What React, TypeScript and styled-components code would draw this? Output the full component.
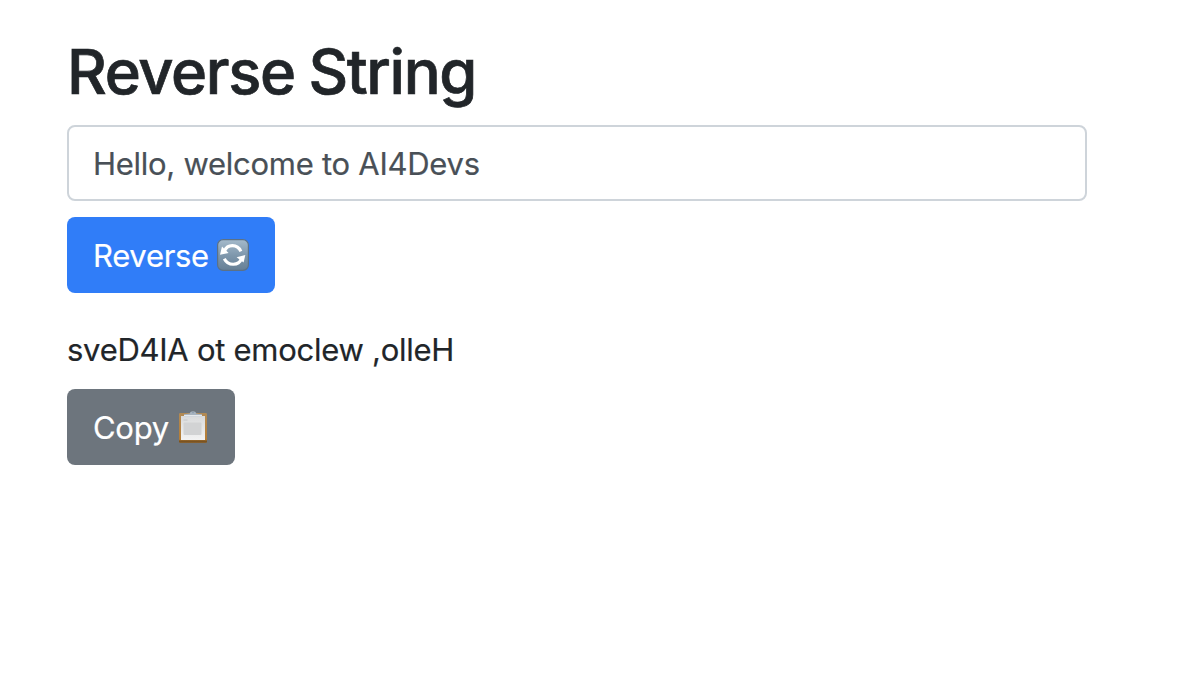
import React, { useState } from 'react';
import styled, { createGlobalStyle } from 'styled-components';

const GlobalStyle = createGlobalStyle`
  *, *::before, *::after { box-sizing: border-box; }
  body {
    margin: 0;
    background: #fff;
    color: #212529;
    font-family: Inter, "Liberation Sans", sans-serif;
    font-size: 31px;
    font-weight: 400;
    line-height: 48px;
    -webkit-text-stroke: 0.2px currentColor;
  }
`;

const Page = styled.main`
  display: flex;
  flex-direction: column;
  align-items: flex-start;
  padding: 33px 99px 0 67px;
`;

const Title = styled.h1`
  margin: 0 0 15px;
  font-size: 61.5px;
  font-weight: 500;
  line-height: 77px;
  letter-spacing: -1.35px;
  word-spacing: -1.5px;
  -webkit-text-stroke: 0.7px currentColor;
`;

const TextInput = styled.input`
  width: 100%;
  height: 76px;
  padding: 12px 24px;
  border: 2px solid #ced4da;
  border-radius: 8px;
  background: #fff;
  color: #495057;
  font: inherit;
  letter-spacing: -0.27px;
  outline: none;
`;

const Button = styled.button<{ $tone: 'primary' | 'secondary'; $width: number }>`
  display: flex;
  align-items: center;
  justify-content: space-between;
  width: ${({ $width }) => $width}px;
  height: 76px;
  padding: 0 26px;
  border: 0;
  border-radius: 8px;
  background: ${({ $tone }) => ($tone === 'primary' ? '#307df8' : '#6d757d')};
  color: #fff;
  font: inherit;
  letter-spacing: -0.3px;
  white-space: nowrap;
`;

const ReverseButton = styled(Button)`
  margin-top: 16px;
`;

const CopyButton = styled(Button)`
  padding-right: 27px;
`;

const Label = styled.span`
  padding-top: 2px;
`;

const Result = styled.p`
  margin: 33px 0 15px;
  letter-spacing: -0.27px;
`;

const Icon = styled.svg`
  flex: none;
  display: block;
`;

const CycleIcon = () => (
  <Icon width="32" height="32" viewBox="0 0 32 32" aria-hidden="true">
    <defs>
      <linearGradient id="tile" x1="0" y1="0" x2="0" y2="1">
        <stop offset="0" stopColor="#a5bacb" />
        <stop offset="0.5" stopColor="#7f98ad" />
        <stop offset="1" stopColor="#667f95" />
      </linearGradient>
    </defs>
    <rect x="0.6" y="0.6" width="30.8" height="30.8" rx="5.5" fill="url(#tile)" stroke="#5b7187" strokeWidth="1.2" />
    <g fill="none" stroke="#fff" strokeWidth="3.1">
      <path d="M7.6 11.8C10.2 5.2 20.2 4.4 23.9 12.3" />
      <path d="M24.4 19.9C21.8 26.8 11.2 27.4 7.3 19.7" />
    </g>
    <path d="M5 7.6 L3 15.8 L11.6 14Z" fill="#fff" />
    <path d="M28.3 16 L19.6 18.3 L26.6 23.6Z" fill="#fff" />
  </Icon>
);

const ClipboardIcon = () => (
  <Icon width="30" height="34" viewBox="0 0 30 34" aria-hidden="true">
    <defs>
      <linearGradient id="board" x1="0" y1="0" x2="0" y2="1">
        <stop offset="0" stopColor="#b28a55" />
        <stop offset="0.88" stopColor="#b57d35" />
        <stop offset="0.94" stopColor="#76501f" />
        <stop offset="1" stopColor="#8a6230" />
      </linearGradient>
      <linearGradient id="sheet" x1="0" y1="0" x2="0" y2="1">
        <stop offset="0" stopColor="#d9dadb" />
        <stop offset="1" stopColor="#f3f3f3" />
      </linearGradient>
    </defs>
    <rect x="1" y="3" width="28" height="30" rx="1.3" fill="url(#board)" />
    <rect x="3" y="6" width="24" height="24" fill="url(#sheet)" />
    <path d="M5.5 10h4" stroke="#bfc0c1" strokeWidth="0.8" />
    <rect x="5.5" y="12.5" width="18" height="12.5" rx="1" fill="#d2d3d4" />
    <path d="M11.8 3.5C12 0.4 18 0.4 18.2 3.5L24 4.2V6.8H6V4.2Z" fill="#a7b3bf" />
    <path d="M6 5.8h18" stroke="#e5e8eb" strokeWidth="1.6" />
    <circle cx="15" cy="2.6" r="0.8" fill="#8799ac" />
  </Icon>
);

export default function App() {
  const [text, setText] = useState('Hello, welcome to AI4Devs');
  const [result, setResult] = useState('sveD4IA ot emoclew ,olleH');

  return (
    <>
      <GlobalStyle />
      <Page>
        <Title>Reverse String</Title>
        <TextInput aria-label="Text" value={text} onChange={(e) => setText(e.target.value)} />
        <ReverseButton $tone="primary" $width={208} onClick={() => setResult([...text].reverse().join(''))}>
          <Label>Reverse</Label>
          <CycleIcon />
        </ReverseButton>
        <Result>{result}</Result>
        <CopyButton $tone="secondary" $width={168} onClick={() => navigator.clipboard?.writeText(result)}>
          <Label>Copy</Label>
          <ClipboardIcon />
        </CopyButton>
      </Page>
    </>
  );
}
